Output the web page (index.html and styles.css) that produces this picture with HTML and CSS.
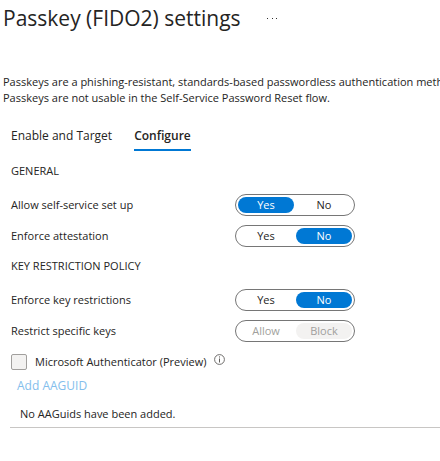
FILE: index.html
```
<!DOCTYPE html>
<html lang="en">
<head>
    <meta charset="UTF-8">
    <meta name="viewport" content="width=device-width, initial-scale=1.0">
    <title>Passkey (FIDO2) settings</title>
    <link rel="stylesheet" href="styles.css">
</head>
<body>
    <!-- Blade title -->
    <header class="header">
        <h1>Passkey (FIDO2) settings</h1>
        <button type="button" class="more" aria-label="More options">
            <svg width="11" height="3" viewBox="0 0 11 3"><path d="M0 1h1v1H0zM5 1h1v1H5zM9 1h1v1H9z" fill="#323130"/></svg>
        </button>
    </header>

    <p class="intro">Passkeys are a phishing-resistant, standards-based passwordless authentication method<br>Passkeys are not usable in the Self-Service Password Reset flow.</p>

    <nav class="tabs">
        <a href="#enable" class="tab">Enable and Target</a>
        <a href="#configure" class="tab active">Configure</a>
    </nav>

    <form class="settings" id="configure">
        <h2>GENERAL</h2>
        <div class="row" role="radiogroup" aria-labelledby="selfService">
            <span id="selfService" class="name">Allow self-service set up</span>
            <div class="toggle">
                <label><input type="radio" name="selfService" checked><span>Yes</span></label>
                <label><input type="radio" name="selfService"><span>No</span></label>
            </div>
        </div>
        <div class="row" role="radiogroup" aria-labelledby="attestation">
            <span id="attestation" class="name">Enforce attestation</span>
            <div class="toggle">
                <label><input type="radio" name="attestation"><span>Yes</span></label>
                <label><input type="radio" name="attestation" checked><span>No</span></label>
            </div>
        </div>

        <h2>KEY RESTRICTION POLICY</h2>
        <div class="row" role="radiogroup" aria-labelledby="restrictions">
            <span id="restrictions" class="name">Enforce key restrictions</span>
            <div class="toggle">
                <label><input type="radio" name="restrictions"><span>Yes</span></label>
                <label><input type="radio" name="restrictions" checked><span>No</span></label>
            </div>
        </div>
        <div class="row" role="radiogroup" aria-labelledby="specificKeys">
            <span id="specificKeys" class="name">Restrict specific keys</span>
            <div class="toggle">
                <label><input type="radio" name="specificKeys" disabled><span>Allow</span></label>
                <label><input type="radio" name="specificKeys" checked disabled><span>Block</span></label>
            </div>
        </div>

        <div class="authenticator">
            <input type="checkbox" id="authenticator" disabled>
            <label for="authenticator">Microsoft Authenticator (Preview)</label>
            <svg class="info" width="11" height="11" viewBox="0 0 11 11">
                <circle cx="5.5" cy="5.5" r="4.9" fill="none" stroke="#605e5c" stroke-width="0.9"/>
                <path d="M5.5 4.5v4M5.5 2.4v1.1" stroke="#605e5c" stroke-width="1"/>
            </svg>
        </div>

        <!-- Key list -->
        <a href="#add" class="add" aria-disabled="true">Add AAGUID</a>
        <p class="empty">No AAGuids have been added.</p>
    </form>
</body>
</html>
```

FILE: styles.css
```
body {
    margin: 0;
    background-color: #fff;
    color: #252423;
    font-family: "Segoe UI", "Open Sans", "Noto Sans", sans-serif;
    font-size: 12px;
    line-height: 16px;
    overflow-x: hidden;
}

.header {
    display: flex;
    align-items: center;
    gap: 26px;
    padding: 4px 3px;
}

h1 {
    margin: 0;
    font-size: 21px;
    font-weight: 500;
    line-height: 28px;
}

.more {
    display: flex;
    padding: 0;
    border: none;
    background: none;
    cursor: pointer;
}

.intro {
    margin: 38px 0 22px;
    padding-left: 3px;
    font-size: 11px;
    white-space: nowrap;
    overflow: hidden;
}

.tabs {
    display: flex;
    gap: 22px;
    margin-bottom: 12px;
    padding-left: 11px;
}

.tab {
    padding-bottom: 5px;
    border-bottom: 2px solid transparent;
    color: inherit;
    text-decoration: none;
}

.tab.active {
    border-color: #0078d4;
    font-weight: 600;
}

.settings {
    padding-left: 10px;
}

h2 {
    margin: 11px 0 15px 1px;
    font-size: 11px;
    font-weight: 400;
    line-height: 16px;
}

.row {
    display: flex;
    align-items: center;
    margin-bottom: 9px;
}

.name {
    width: 224px;
    padding-left: 1px;
    font-size: 11px;
}

/* Two-way pill switch */
.toggle {
    display: flex;
    gap: 2px;
    padding: 2px;
    border: 1px solid #767676;
    border-radius: 11px;
}

.toggle label {
    position: relative;
    width: 56px;
    cursor: pointer;
}

.toggle input {
    position: absolute;
    inset: 0;
    margin: 0;
    opacity: 0;
}

.toggle span {
    display: block;
    border-radius: 8px;
    font-size: 11px;
    text-align: center;
}

.toggle input:checked + span {
    background-color: #0078d4;
    color: #fff;
}

.toggle input:disabled + span {
    color: #a19f9d;
}

.toggle input:disabled:checked + span {
    background-color: #f3f2f1;
}

.authenticator {
    display: flex;
    align-items: center;
    gap: 8px;
    margin: 12px 0 8px 1px;
    font-size: 11px;
}

.authenticator input {
    appearance: none;
    width: 16px;
    height: 16px;
    margin: 0;
    border: 1px solid #a19f9d;
    border-radius: 2px;
    background-color: #f3f2f1;
}

.info {
    align-self: flex-start;
}

.add {
    margin-left: 7px;
    color: #83beec;
    text-decoration: none;
}

.empty {
    margin: 12px 0 0;
    padding: 0 0 5px 10px;
    border-bottom: 1px solid #c8c6c4;
    font-size: 11px;
}
```
